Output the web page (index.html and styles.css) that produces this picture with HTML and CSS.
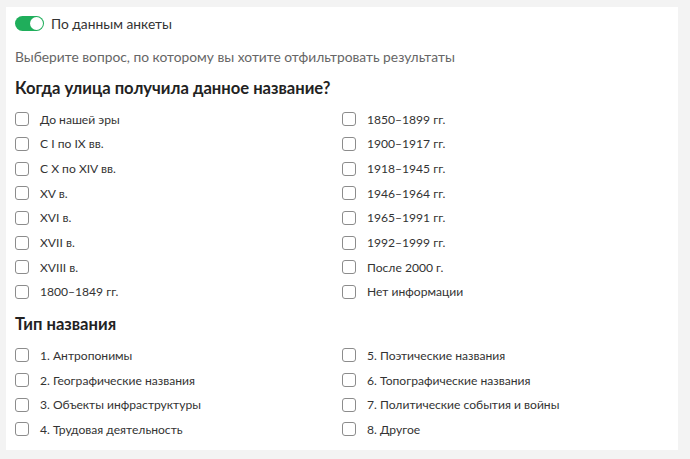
FILE: index.html
```html
<!DOCTYPE html>
<html lang="ru">
<head>
    <meta charset="UTF-8">
    <title>Фильтр</title>
    <link rel="stylesheet" href="styles.css">
</head>
<body>
    <div class="filter-card">
        <label class="switch-row">
            <span class="switch"><span class="switch-knob"></span></span>
            <span class="switch-label">По данным анкеты</span>
        </label>
        <p class="hint">Выберите вопрос, по которому вы хотите отфильтровать результаты</p>

        <h3 class="question">Когда улица получила данное название?</h3>
        <div class="options">
            <label class="option"><span class="box"></span>До нашей эры</label>
            <label class="option"><span class="box"></span>1850–1899 гг.</label>
            <label class="option"><span class="box"></span>С I по IX вв.</label>
            <label class="option"><span class="box"></span>1900–1917 гг.</label>
            <label class="option"><span class="box"></span>С X по XIV вв.</label>
            <label class="option"><span class="box"></span>1918–1945 гг.</label>
            <label class="option"><span class="box"></span>XV в.</label>
            <label class="option"><span class="box"></span>1946–1964 гг.</label>
            <label class="option"><span class="box"></span>XVI в.</label>
            <label class="option"><span class="box"></span>1965–1991 гг.</label>
            <label class="option"><span class="box"></span>XVII в.</label>
            <label class="option"><span class="box"></span>1992–1999 гг.</label>
            <label class="option"><span class="box"></span>XVIII в.</label>
            <label class="option"><span class="box"></span>После 2000 г.</label>
            <label class="option"><span class="box"></span>1800–1849 гг.</label>
            <label class="option"><span class="box"></span>Нет информации</label>
        </div>

        <h3 class="question">Тип названия</h3>
        <div class="options">
            <label class="option"><span class="box"></span>1. Антропонимы</label>
            <label class="option"><span class="box"></span>5. Поэтические названия</label>
            <label class="option"><span class="box"></span>2. Географические названия</label>
            <label class="option"><span class="box"></span>6. Топографические названия</label>
            <label class="option"><span class="box"></span>3. Объекты инфраструктуры</label>
            <label class="option"><span class="box"></span>7. Политические события и войны</label>
            <label class="option"><span class="box"></span>4. Трудовая деятельность</label>
            <label class="option"><span class="box"></span>8. Другое</label>
        </div>
    </div>
</body>
</html>
```

FILE: styles.css
```css
body {
    margin: 0;
    padding: 7px 12px 13px 6px;
    background-color: #f3f3f3;
    font-family: Lato, "Noto Sans", sans-serif;
    color: #333;
}
.filter-card {
    background-color: #fff;
    padding: 8px 9px 8px 9px;
}
.switch-row {
    display: flex;
    align-items: center;
    gap: 7px;
    height: 17px;
}
.switch {
    display: inline-flex;
    justify-content: flex-end;
    align-items: center;
    width: 29px;
    height: 15px;
    padding: 0 1px;
    box-sizing: border-box;
    border-radius: 8px;
    background-color: #1fae5b;
}
.switch-knob {
    width: 13px;
    height: 13px;
    border-radius: 50%;
    background-color: #fff;
}
.switch-label {
    font-size: 13.8px;
}
.hint {
    margin: 16px 0 13px;
    font-size: 13.8px;
    line-height: 17px;
    color: #666;
}
.question {
    margin: 10px 0 0;
    font-size: 16.6px;
    line-height: 20px;
    font-weight: 700;
    color: #222;
}
.options {
    display: grid;
    grid-template-columns: 1fr 1fr;
    margin-top: 9px;
}
.option {
    display: flex;
    align-items: center;
    gap: 11px;
    height: 24.65px;
    font-size: 12.1px;
    color: #333;
}
.box {
    width: 14px;
    height: 14px;
    box-sizing: border-box;
    border: 1px solid #8c8c8c;
    border-radius: 3px;
}
```
